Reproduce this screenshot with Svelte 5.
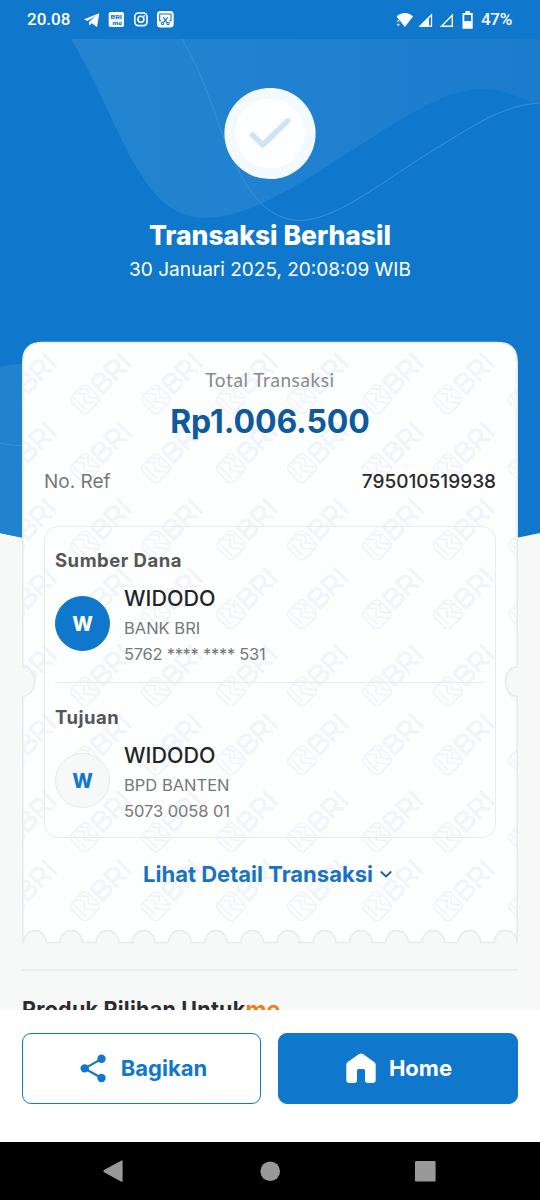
<script>
  const cols = [-7, 68, 139, 214, 285, 360, 431, 506];
  const rows = [352, 421, 498, 567, 644, 713, 790, 859];
  const marks = rows.flatMap((y) => cols.map((x) => ({ x, y })));

  // Ticket outline: rounded top, a notch on each side, scalloped bottom edge.
  const left = 22.8, right = 517.2, bottom = 942.5;
  let scallops = '';
  for (let i = 13; i >= 0; i--) {
    const c = 35 + i * 36.2;
    scallops += ` L${(c + 11.5).toFixed(1)} ${bottom} C${(c + 9.8).toFixed(1)} 926.5 ${(c - 9.8).toFixed(1)} 926.5 ${(c - 11.5).toFixed(1)} ${bottom}`;
  }
  const ticket =
    `M${left} 362 Q${left} 342.5 42.5 342.5 H497.5 Q${right} 342.5 ${right} 362 V666.5 ` +
    `C501.5 669 501.5 694 ${right} 696.5 V${bottom}${scallops} H${left} V696.5 C38.5 694 38.5 669 ${left} 666.5 Z`;

  const parties = [
    { heading: 'Sumber Dana', name: 'WIDODO', bank: 'BANK BRI', number: '5762 **** **** 531', own: true },
    { heading: 'Tujuan', name: 'WIDODO', bank: 'BPD BANTEN', number: '5073 0058 01', own: false }
  ];
</script>

<div class="screen">
  <svg class="backdrop" width="540" height="1010" viewBox="0 0 540 1010" aria-hidden="true">
    <defs>
      <linearGradient id="wave" x1="0" y1="0" x2="1" y2="0">
        <stop offset="0" stop-color="#2385d1" />
        <stop offset="1" stop-color="#1b7cce" />
      </linearGradient>
      <clipPath id="ticketClip"><path d={ticket} /></clipPath>
      <g id="mark" fill="none" stroke="#f1f4fa" stroke-width="2">
        <rect x="-35" y="-12" width="24" height="24" rx="5" />
        <path d="M-30 -11V8M-25.5 -11.5L-19.5 -4.5L-25 1L-17.5 11.5M-19 -11.5L-13.5 -5L-18.5 1L-12 9" />
        <path d="M-5 -9H2C10.5 -9 10.5 0 2 0H-5M2 0C12 0 12 9 2 9H-5V-9M15 10.5V-9H21.5C30 -9 30 2.5 21.5 2.5H15M22 2.5L29 10.5M35 -10.5V10.5" stroke-width="3.4" />
      </g>
    </defs>
    <path d="M0 0H540V533Q270 592 0 533Z" fill="#1078cc" />
    <path d="M71 39C98 82 118 139 139 171C158 204 180 218 205 218C263 218 340 155 400 120C435 99 459 89 483 89C505 89 523 99 533 103L540 102V39Z" fill="url(#wave)" />
    <path d="M182 39C207 79 217 128 235 163C251 199 272 220 300 220.5C338 220 385 179 440 146C475 125 503 105 540 103" fill="none" stroke="#3b92d8" stroke-width="1" />
    <path d="M0 367Q12 364 40 363V541Q18 537 0 533Z" fill="#2182d0" />
    <path d="M0 443Q10 446 40 446" fill="none" stroke="#3b92d8" />
    <path d={ticket} fill="#fdfefe" />
    <g clip-path="url(#ticketClip)">
      {#each marks as m}
        <use href="#mark" transform="translate({m.x + 32.5} {m.y + 31.7}) rotate(-45) scale(.96)" />
      {/each}
    </g>
    <path d={ticket} fill="none" stroke="#e8ebec" stroke-width="1.6" />
  </svg>

  <header class="status">
    <span class="clock">20.08</span>
    <svg width="92" height="20" viewBox="82 10 92 20" aria-hidden="true">
      <path d="M84 19.3L99.3 13.2L97 27L91.8 23.2L89.3 25.4L88.9 21.9L95.8 15.9L87.3 21Z" fill="#fff" />
      <rect x="108.7" y="12" width="15.3" height="15" rx="1.8" fill="#fff" />
      <text x="110.5" y="18.6" class="glyph" font-size="6" textLength="11.5" lengthAdjust="spacingAndGlyphs">BRI</text>
      <text x="112.5" y="25.4" class="glyph" font-size="5.2" textLength="9.5" lengthAdjust="spacingAndGlyphs">mo</text>
      <g fill="none" stroke="#fff" stroke-width="1.6">
        <rect x="134.8" y="13" width="12.2" height="12.6" rx="3.5" />
        <circle cx="140.9" cy="19.3" r="3" />
      </g>
      <circle cx="144.3" cy="15.8" r=".9" fill="#fff" />
      <rect x="157" y="11" width="16.7" height="16.5" rx="3.5" fill="#fff" />
      <g fill="none" stroke="#1078cc" stroke-width="1.1">
        <path d="M161.5 20.8H159.7V14H171V20.8H169.2M163 17.3L167.3 22.6M167.7 17.3L163.4 22.6" />
        <circle cx="162.6" cy="23.5" r="1.2" /><circle cx="168.1" cy="23.5" r="1.2" />
      </g>
    </svg>
    <svg class="signals" width="80" height="20" viewBox="395 9 80 20" aria-hidden="true">
      <path d="M396.6 15.5C400.5 10.8 409 10.8 413 15.5L404.8 26Z" fill="#fff" />
      <path d="M396.3 20.7L398.3 18.5L400.3 20.7ZM396.3 22.7L398.3 25.5L400.3 22.7Z" fill="#fff" stroke="#1078cc" stroke-width=".5" />
      <path d="M420 25.2L431.5 13.7V25.2Z" fill="none" stroke="#fff" stroke-width="1.3" />
      <path d="M419 25.8L429 15.6V25.8Z" fill="#fff" />
      <path d="M441.5 25.2L452.3 14.3V25.2Z" fill="none" stroke="#fff" stroke-width="1.4" />
      <path d="M465.5 10H470V12H472.7V27.7H462.5V12H465.5Z" fill="#fff" />
      <path d="M464.3 14H471V20H464.3Z" fill="#1078cc" />
    </svg>
    <span class="percent">47%</span>
  </header>

  <main>
    <section class="result">
      <svg width="92" height="92" viewBox="0 0 92 92" aria-hidden="true">
        <circle cx="46" cy="45.5" r="45.6" fill="#f4f9fe" />
        <circle cx="46" cy="45.5" r="35" fill="#fdfeff" />
        <path d="M28.5 47L38.7 57L63.8 32.8" fill="none" stroke="#cfe3f5" stroke-width="5.4" stroke-linecap="round" stroke-linejoin="round" />
      </svg>
      <h1>Transaksi Berhasil</h1>
      <p>30 Januari 2025, 20:08:09 WIB</p>
    </section>

    <section class="ticket">
      <p class="label">Total Transaksi</p>
      <p class="amount">Rp1.006.500</p>
      <div class="ref"><span>No. Ref</span><strong>795010519938</strong></div>
      <div class="accounts">
        {#each parties as p}
          <article>
            <h2>{p.heading}</h2>
            <div class="party">
              <span class="avatar" class:own={p.own}>W</span>
              <div class="who">
                <p class="name">{p.name}</p>
                <p class="bank">{p.bank}</p>
                <p class="number" class:masked={p.own}>{p.number}</p>
              </div>
            </div>
          </article>
        {/each}
      </div>
      <div class="detail">
        <span>Lihat Detail Transaksi</span>
        <svg width="12" height="9" viewBox="0 0 12 9" aria-hidden="true"><path d="M1.3 2L6 6.5L10.7 2" fill="none" stroke="#185f9e" stroke-width="1.8" stroke-linecap="round" stroke-linejoin="round" /></svg>
      </div>
    </section>

    <section class="products"><h3>Produk Pilihan Untuk</h3><span class="me">me</span></section>
  </main>

  <footer class="actions">
    <button class="share">
      <svg width="27" height="29" viewBox="0 0 27 29" aria-hidden="true">
        <path d="M21.5 5L4.7 14.4L21.5 24" fill="none" stroke="#1078cc" stroke-width="2.2" />
        <g fill="#1078cc"><circle cx="21.5" cy="4.7" r="4.2" /><circle cx="4.7" cy="14.4" r="4.2" /><circle cx="21.5" cy="24" r="4.2" /></g>
      </svg>
      <span>Bagikan</span>
    </button>
    <button class="home">
      <svg width="30" height="31" viewBox="0 0 30 31" aria-hidden="true">
        <path d="M.3 11.8Q.3 10 1.8 9L13 1.1Q15 -.2 17 1.1L28.2 9Q29.7 10 29.7 11.8V27Q29.7 30 26.7 30H22Q19 30 19 27V17.5Q19 16 17.5 16H12.5Q11 16 11 17.5V27Q11 30 8 30H3.3Q.3 30 .3 27Z" fill="#fff" />
      </svg>
      <span>Home</span>
    </button>
  </footer>

  <nav>
    <svg width="540" height="58" viewBox="0 0 540 58" aria-hidden="true">
      <g fill="#999">
        <path d="M104 28L121.5 18.5Q122.6 18 122.6 19.2V39Q122.6 40.3 121.5 39.7L104 30.3Q102.6 29.2 104 28Z" />
        <circle cx="270.2" cy="29.3" r="9.8" />
        <rect x="415" y="19" width="20.6" height="20.6" rx="1.3" />
      </g>
    </svg>
  </nav>
</div>

<style>
  :global(body) { margin: 0; }
  .screen {
    position: relative;
    display: flex;
    flex-direction: column;
    width: 540px;
    height: 1200px;
    overflow: hidden;
    background: #f7f9f9;
    font-family: Inter, "Open Sans", sans-serif;
  }
  .backdrop { position: absolute; inset: 0; }
  p, h1, h2, h3 { margin: 0; white-space: nowrap; }
  .status {
    position: relative;
    display: flex;
    align-items: center;
    box-sizing: border-box;
    height: 39px;
    padding: 0 27px;
    color: #fff;
    font: 500 17px/39px Roboto, sans-serif;
  }
  .clock { width: 55px; }
  .signals { margin-left: auto; margin-right: 6px; }
  .percent { width: 32px; letter-spacing: -.3px; }
  .glyph { font-family: Roboto, sans-serif; font-weight: 900; fill: #1078cc; }
  main { position: relative; height: 971px; overflow: hidden; }
  .result {
    display: flex;
    flex-direction: column;
    align-items: center;
    height: 303px;
    padding-top: 49px;
    box-sizing: border-box;
    color: #fff;
  }
  h1 { margin-top: 38px; font-size: 26.5px; line-height: 34px; font-weight: 800; }
  .result p { font-size: 19px; line-height: 24px; margin-top: 6px; }
  .ticket { height: 601px; padding: 24px 22px 0; margin: 0 22px; box-sizing: border-box; }
  .label { text-align: center; color: #8b8b8d; font: 400 19px/28px Lato, sans-serif; letter-spacing: .58px; }
  .amount { text-align: center; color: #0f5a9c; font-size: 32px; line-height: 40px; font-weight: 700; margin-top: 8px; letter-spacing: -.1px; }
  .ref { display: flex; justify-content: space-between; margin-top: 26px; font-size: 19px; line-height: 28px; color: #77787a; }
  .ref strong { color: #2b2b2d; font-weight: 500; }
  .accounts {
    box-sizing: border-box;
    height: 312px;
    margin-top: 30px;
    padding: 0 10px;
    border: 1.5px solid #e9ebed;
    border-radius: 14px;
  }
  article { height: 155px; padding-top: 20px; box-sizing: border-box; }
  article + article { height: 157px; padding-top: 21px; border-top: 1.5px solid #e9ebed; }
  h2 { font-size: 18.5px; line-height: 26px; font-weight: 700; color: #565658; letter-spacing: .5px; }
  .party { display: flex; gap: 14px; align-items: flex-start; height: 80px; margin-top: 10px; }
  .avatar {
    box-sizing: border-box;
    width: 55px;
    height: 55px;
    margin-top: 13px;
    border: 1px solid #e7eaeb;
    border-radius: 50%;
    background: #f7f9f9;
    color: #1078cc;
    font-size: 19.5px;
    line-height: 54px;
    font-weight: 800;
    text-align: center;
  }
  .avatar.own { background: #1078cc; border-color: #1078cc; color: #fff; }
  .name { color: #242426; font-size: 21.5px; line-height: 30px; font-weight: 500; }
  .bank, .number { color: #77787a; font-size: 16.5px; line-height: 26px; }
  .bank { margin-top: 2px; }
  .number { letter-spacing: -.07px; }
  .number.masked { letter-spacing: -.28px; }
  .detail { display: flex; justify-content: center; align-items: center; gap: 7px; margin-top: 21px; padding-right: 5px; color: #1973c2; font-size: 22px; line-height: 30px; font-weight: 700; }
  .products { display: flex; align-items: flex-start; margin: 26px 22px 0; padding-top: 21px; border-top: 2px solid #eceeee; }
  h3 { font-size: 21.5px; line-height: 34px; font-weight: 700; color: #2b2b2d; letter-spacing: .25px; }
  .me { color: #f87812; font-size: 23px; line-height: 37px; font-weight: 700; }
  .actions { position: relative; display: grid; grid-template-columns: 239px 240px; gap: 17px; height: 132px; padding: 23px 22px 0; box-sizing: border-box; background: #fff; }
  button { display: flex; align-items: center; justify-content: center; height: 71px; border: 1.5px solid #1078cc; border-radius: 9px; box-sizing: border-box; padding: 0 0 1px; font: 700 22px/30px Inter, sans-serif; }
  .share { background: #fff; color: #1078cc; gap: 14px; padding-left: 4px; }
  .home { background: #1078cc; color: #fff; gap: 13px; padding-left: 2px; }
  nav { position: relative; height: 58px; background: #000; }
  nav svg { display: block; }
</style>
